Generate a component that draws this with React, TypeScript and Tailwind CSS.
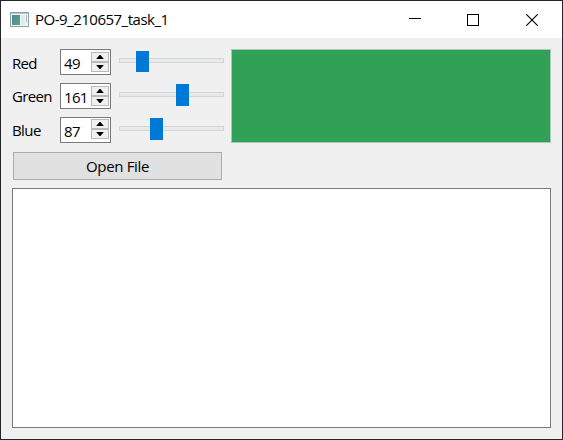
import React from "react";

type Channel = { name: string; value: number; label: string; handle: string; arrows: string };

const channels: Channel[] = [
  { name: "Red", value: 49, label: "pt-[4px] tracking-[-0.7px]", handle: "left-[17px] top-[2px] h-[21px]", arrows: "mt-[2px]" },
  { name: "Green", value: 161, label: "pt-[3px] tracking-[-0.65px]", handle: "left-[57px] top-[1px] h-[22px]", arrows: "mt-[2px]" },
  { name: "Blue", value: 87, label: "pt-[3px] tracking-[-0.6px]", handle: "left-[31px] top-[1px] h-[22px]", arrows: "mt-px" },
];

function Arrow({ up }: { up?: boolean }) {
  return (
    <div className="flex h-[10px] items-center justify-center border border-[#b9b9b9] bg-[#f0f0f0]">
      <svg width="8" height="4" viewBox="0 0 8 4">
        <path d={up ? "M.2 4 L3.5 0 H4.5 L7.8 4Z" : "M.2 0 L3.5 4 H4.5 L7.8 0Z"} fill="#000" />
      </svg>
    </div>
  );
}

function ChannelRow({ c }: { c: Channel }) {
  return (
    <div className="flex h-[26px]">
      <span className={`w-[48px] leading-5 whitespace-nowrap ${c.label}`}>{c.name}</span>
      <div className="flex w-[51px] justify-between border border-[#7a7a7a] bg-white pr-px">
        <span className="pt-[3px] pl-[3px] leading-5 tracking-[-0.7px]">{c.value}</span>
        <div className={`w-[18px] shrink-0 ${c.arrows}`}>
          <Arrow up />
          <Arrow />
        </div>
      </div>
      <div className="relative ml-2 w-[105px] pt-[9px]">
        <div className="h-[5px] border border-[#d2d6d7] bg-[#e7eaea]" />
        <div className={`absolute w-[13px] bg-[#0078d7] ${c.handle}`} />
      </div>
    </div>
  );
}

export default function App() {
  return (
    <div className="flex h-[440px] w-[563px] flex-col border border-[#25252a] bg-[#f0f0f0] font-['Open_Sans','Noto_Sans',sans-serif] text-[15px] text-black">
      <header className="flex h-[37px] shrink-0 items-center bg-white pl-[9px]">
        <svg width="19" height="15" viewBox="0 0 19 15" className="shrink-0">
          <defs>
            <linearGradient id="pane" x1="0" y1="0" x2="1" y2="1">
              <stop offset="0" stopColor="#4b85a0" />
              <stop offset="1" stopColor="#5fa57c" />
            </linearGradient>
          </defs>
          <rect x=".5" y=".5" width="18" height="14" fill="#f3f5f5" stroke="#8d9fa8" />
          <path d="M1 1.5H18" stroke="#b5c4cc" />
          <rect x="2" y="3" width="8" height="10" fill="url(#pane)" />
          <rect x="11" y="3" width="4" height="10" fill="#e4ebeb" />
          <rect x="16" y="3" width="1" height="7" fill="#a3b8c5" />
        </svg>
        <span className="ml-[6px] whitespace-nowrap tracking-[-0.5px]">PO-9_210657_task_1</span>
        <div className="mr-[24px] ml-auto flex items-center">
          <svg width="12" height="13" viewBox="0 0 12 13"><path d="M0 5.5H12" stroke="#000" /></svg>
          <svg className="ml-[46px]" width="12" height="12" viewBox="0 0 12 12"><rect x=".5" y=".5" width="11" height="11" fill="none" stroke="#000" /></svg>
          <svg className="ml-[47px]" width="12" height="12" viewBox="0 0 12 12"><path d="M.25 .25L11.75 11.75M11.75 .25L.25 11.75" stroke="#000" strokeWidth="1.1" /></svg>
        </div>
      </header>
      <main className="flex flex-1 flex-col px-[11px] pt-[11px] pb-[11px]">
        <div className="flex h-[94px] justify-between">
          <div className="flex flex-col gap-2">
            {channels.map((c) => <ChannelRow key={c.name} c={c} />)}
          </div>
          <div className="h-[94px] w-[320px] border border-[#a9c9b3] bg-[#31a157]" />
        </div>
        <button className="mt-[9px] ml-px h-[28px] w-[209px] border border-[#adadad] bg-[#e1e1e1] pb-px leading-5 tracking-[-0.35px]">Open File</button>
        <textarea className="mt-2 h-[240px] w-full resize-none border border-[#7a7a7a] bg-white outline-none" />
      </main>
    </div>
  );
}
